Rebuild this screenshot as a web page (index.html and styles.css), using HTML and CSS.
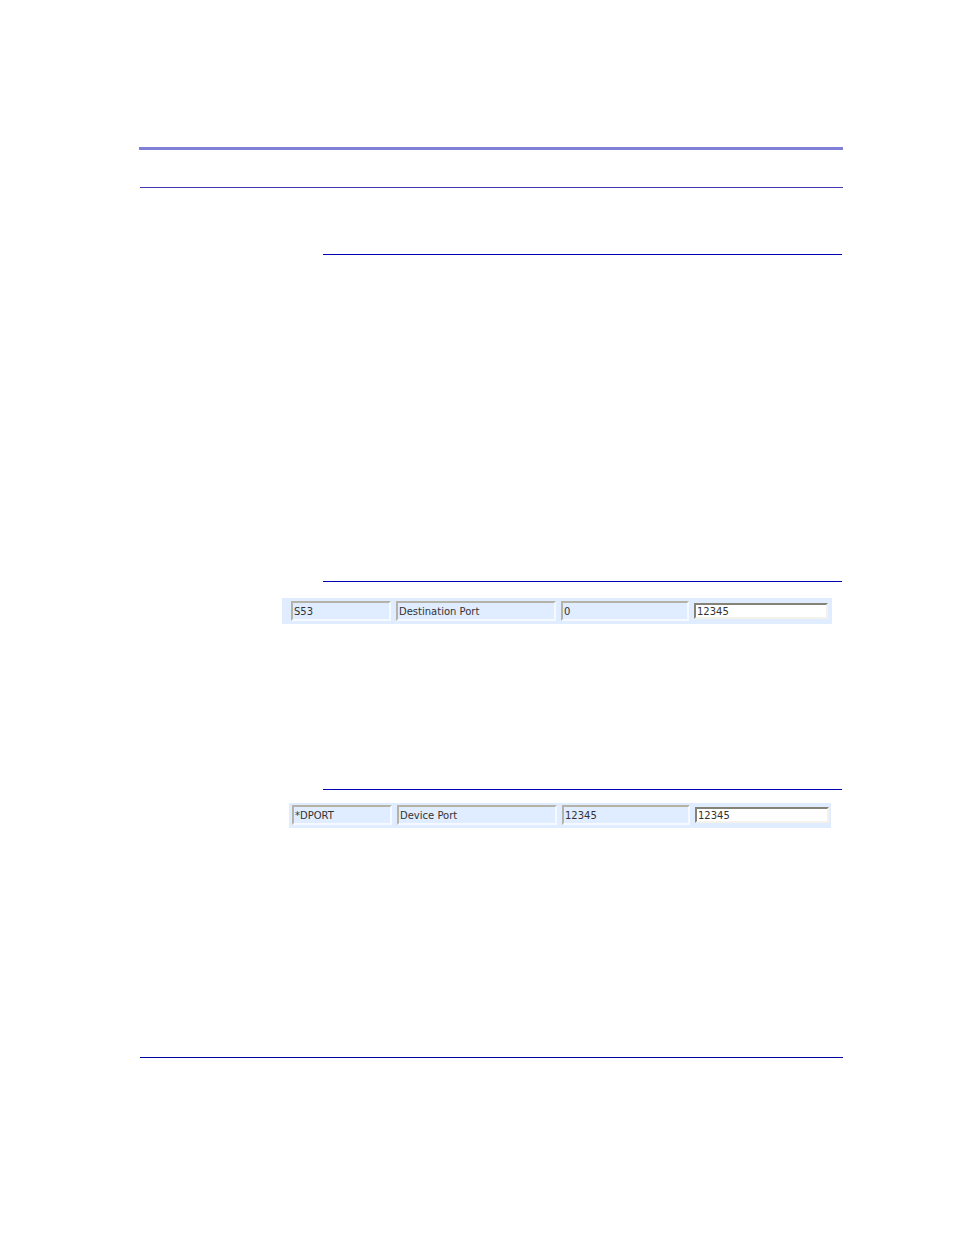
FILE: index.html
```html
<!DOCTYPE html>
<html lang="en">
<head>
    <meta charset="UTF-8">
    <meta name="viewport" content="width=device-width, initial-scale=1.0">
    <title>Port Settings</title>
    <link rel="stylesheet" href="styles.css">
</head>
<body>
    <div class="page">
        <header class="page-header"></header>

        <main class="content">
            <section class="section intro"></section>

            <section class="section destination">
                <form class="register-row">
                    <input class="cell" type="text" value="S53" aria-label="Register" readonly>
                    <input class="cell" type="text" value="Destination Port" aria-label="Description" readonly>
                    <input class="cell" type="text" value="0" aria-label="Current value" readonly>
                    <input class="cell editable" type="text" value="12345" aria-label="New value">
                </form>
            </section>

            <section class="section device">
                <form class="register-row compact">
                    <input class="cell" type="text" value="*DPORT" aria-label="Command" readonly>
                    <input class="cell" type="text" value="Device Port" aria-label="Description" readonly>
                    <input class="cell" type="text" value="12345" aria-label="Current value" readonly>
                    <input class="cell editable" type="text" value="12345" aria-label="New value">
                </form>
            </section>
        </main>

        <footer class="page-footer"></footer>
    </div>
</body>
</html>
```

FILE: styles.css
```css
* {
    margin: 0;
    padding: 0;
    box-sizing: border-box;
}

body {
    font-family: "DejaVu Sans", Verdana, sans-serif;
    background: white;
}

.page {
    padding: 147px 111px 0 139px;
}

/* Thick rule on top, thin rule below */
.page-header {
    height: 40px;
    border-top: 3px solid #8080d8;
}

.content {
    margin-left: 1px;
    border-top: 1px solid #4338b0;
    padding-top: 66px;
}

/* The section rule starts at the text column */
.section::before {
    content: "";
    display: block;
    height: 1px;
    margin: 0 1px 0 183px;
    background: #0000b0;
}

.intro {
    min-height: 327px;
}

.destination {
    min-height: 208px;
}

.device {
    min-height: 268px;
}

.register-row {
    display: grid;
    grid-template-columns: 100fr 160fr 128fr 134fr;
    align-items: center;
    gap: 5px;
    margin: 16px 11px 0 142px;
    padding: 3px 4px 3px 9px;
    background: #e0ecff;
}

.register-row.compact {
    margin: 13px 12px 0 149px;
    padding: 2px 2px 3px 3px;
}

.cell {
    width: 100%;
    min-width: 0;
    height: 20px;
    padding: 0 1px;
    border: 2px solid;
    border-color: #b5b2a8 #f6f9ff #f6f9ff #b5b2a8;
    background: #e0ecff;
    color: #333;
    font-family: inherit;
    font-size: 10px;
}

.cell.editable {
    height: 16px;
    border-color: #858278 #f4f2ea #f4f2ea #858278;
    background: white;
}

.page-footer {
    margin-left: 1px;
    border-top: 1px solid #0000a0;
}
```
